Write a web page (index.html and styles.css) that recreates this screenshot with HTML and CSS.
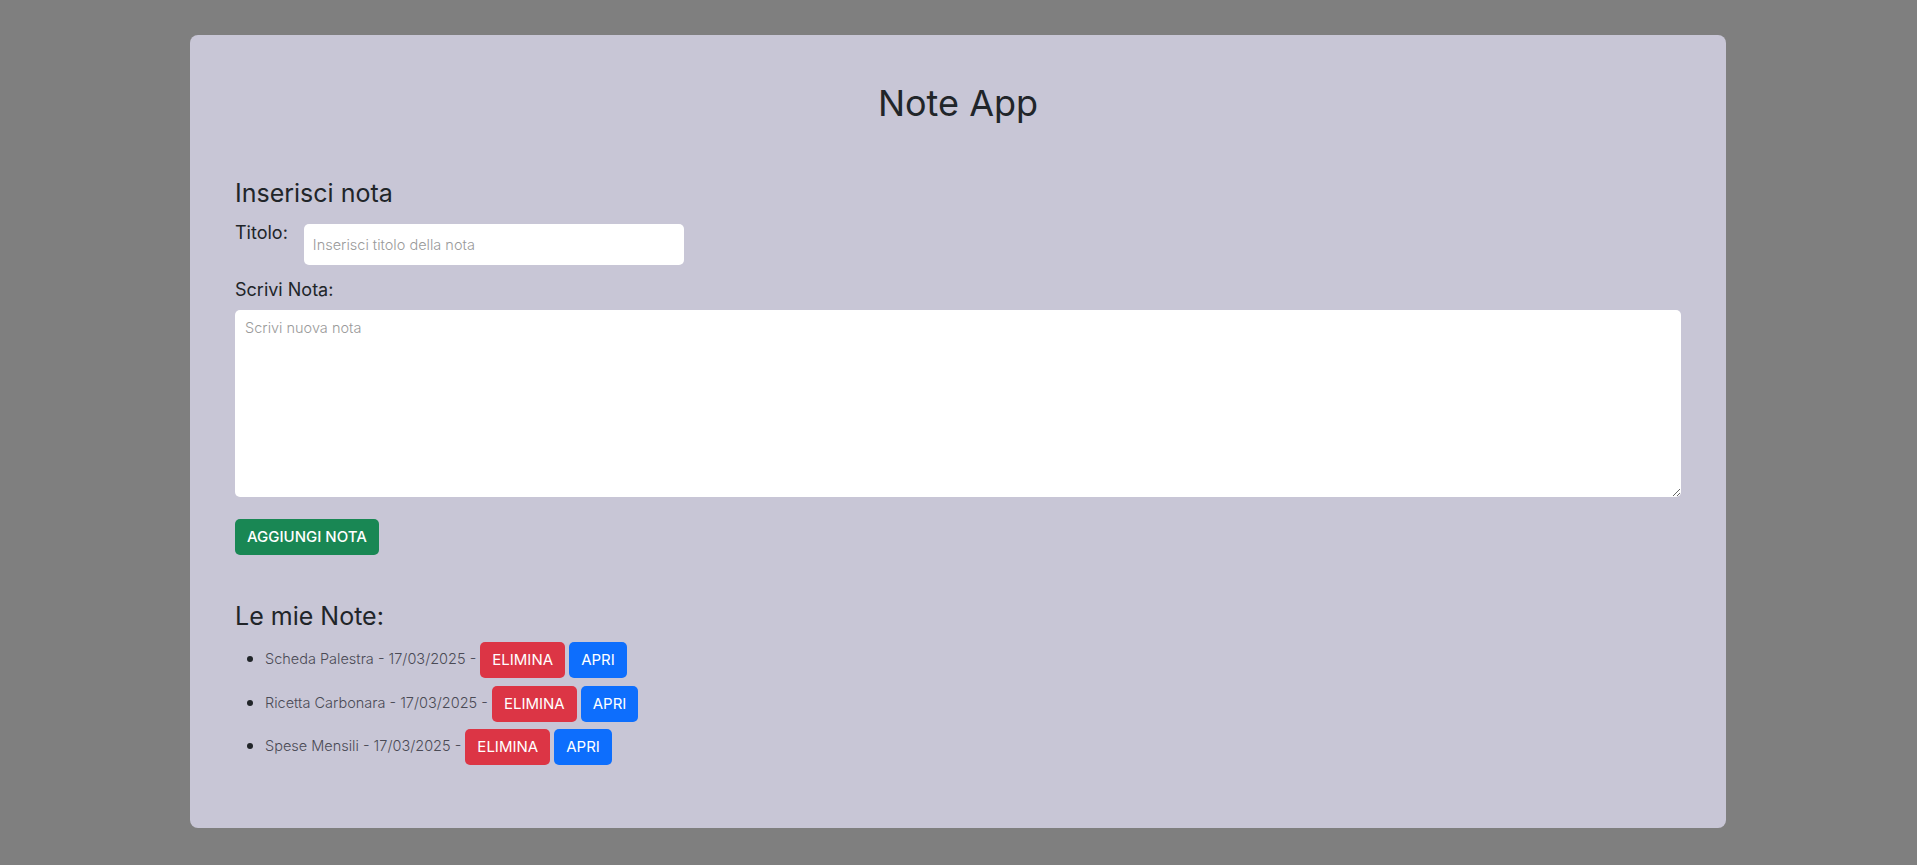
FILE: index.html
```html
<!DOCTYPE html>
<html lang="it">
<head>
<meta charset="utf-8">
<title>Note App</title>
<link rel="stylesheet" href="styles.css">
</head>
<body>
<main class="card">
  <h1 class="app-title">Note App</h1>

  <section class="form">
    <h4 class="section-title">Inserisci nota</h4>
    <div class="title-row">
      <label class="label" for="titolo">Titolo:</label>
      <input class="title-input" id="titolo" type="text" placeholder="Inserisci titolo della nota">
    </div>
    <label class="label label-block" for="nota">Scrivi Nota:</label>
    <textarea class="note-input" id="nota" placeholder="Scrivi nuova nota"></textarea>
    <button class="btn btn-green">AGGIUNGI NOTA</button>
  </section>

  <section class="notes">
    <h4 class="section-title notes-title">Le mie Note:</h4>
    <ul class="note-list">
      <li>Scheda Palestra - 17/03/2025 - <button class="btn btn-red">ELIMINA</button> <button class="btn btn-blue">APRI</button></li>
      <li>Ricetta Carbonara - 17/03/2025 - <button class="btn btn-red">ELIMINA</button> <button class="btn btn-blue">APRI</button></li>
      <li>Spese Mensili - 17/03/2025 - <button class="btn btn-red">ELIMINA</button> <button class="btn btn-blue">APRI</button></li>
    </ul>
  </section>
</main>
</body>
</html>
```
FILE: styles.css
```css
html, body {
  margin: 0;
  padding: 0;
}
body {
  background: #7f7f7f;
  font-family: Inter, "Noto Sans", sans-serif;
  color: #212529;
}
.card {
  box-sizing: border-box;
  width: 1536px;
  margin: 35px 0 37px 190px;
  padding: 47px 45px 45px;
  background: #c8c6d6;
  border-radius: 8px;
}
.app-title {
  margin: 0 0 53px;
  font-size: 36px;
  font-weight: 400;
  line-height: 43px;
  text-align: center;
}
.section-title {
  margin: 0;
  font-size: 25px;
  font-weight: 400;
  line-height: 30px;
}
.title-row {
  display: flex;
  align-items: flex-start;
  margin-top: 14px;
}
.label {
  font-size: 18px;
  line-height: 22px;
  font-weight: 400;
}
.title-row .label {
  margin-right: 16px;
}
.title-input {
  box-sizing: border-box;
  width: 380px;
  height: 41px;
  margin-top: 2px;
  padding: 0 9px;
  border: none;
  border-radius: 5px;
  background: #fff;
  font-family: Inter, "Noto Sans", sans-serif;
  font-size: 14.5px;
  font-weight: 300;
  color: #212529;
  outline: none;
}
.label-block {
  display: block;
  margin-top: 14px;
  margin-bottom: 9px;
}
.note-input {
  display: block;
  box-sizing: border-box;
  width: 100%;
  height: 187px;
  padding: 9px 10px;
  border: none;
  border-radius: 5px;
  background: #fff;
  font-family: Inter, "Noto Sans", sans-serif;
  font-size: 14.5px;
  font-weight: 300;
  color: #212529;
  outline: none;
  resize: vertical;
}
.title-input::placeholder,
.note-input::placeholder {
  color: #9a9a9a;
}
.btn {
  display: inline-block;
  box-sizing: border-box;
  height: 36px;
  padding: 0 12px;
  border: none;
  border-radius: 5px;
  font-family: Inter, "Noto Sans", sans-serif;
  font-size: 15px;
  font-weight: 400;
  line-height: 36px;
  color: #fff;
  cursor: pointer;
  vertical-align: middle;
}
.btn-green {
  display: block;
  margin-top: 22px;
  font-weight: 500;
  background: #198754;
}
.btn-red {
  background: #dc3545;
}
.btn-blue {
  background: #0d6efd;
}
.notes-title {
  margin-top: 46px;
}
.note-list {
  margin: 9px 0 18px;
  padding-left: 30px;
}
.note-list li {
  font-size: 14.5px;
  font-weight: 300;
  line-height: 36px;
  color: #4a4a55;
}
.note-list li::marker {
  color: #212529;
  font-size: 18px;
}
.note-list li + li {
  margin-top: 5.5px;
}
```
